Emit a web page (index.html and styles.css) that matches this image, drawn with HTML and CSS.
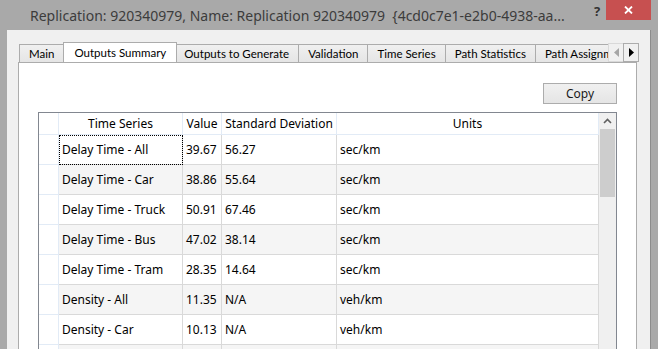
FILE: index.html
```html
<!DOCTYPE html>
<html lang="en">

<head>
    <meta charset="UTF-8">
    <title>Replication 920340979</title>
    <link rel="stylesheet" href="styles.css">
</head>

<body>
    <div class="window">
        <div class="titlebar">
            <span class="title">Replication: 920340979, Name: Replication 920340979&nbsp; {4cd0c7e1-e2b0-4938-aa...</span>
            <span class="help">?</span>
            <span class="close">
                <svg width="9" height="8" viewBox="0 0 9 8">
                    <path d="M1 0.5 L8 7.5 M8 0.5 L1 7.5" stroke="#fff" stroke-width="1.8" fill="none" />
                </svg>
            </span>
        </div>

        <div class="client">
            <div class="tabstrip">
                <div class="tabs">
                    <div class="tab">Main</div>
                    <div class="tab active">Outputs Summary</div>
                    <div class="tab">Outputs to Generate</div>
                    <div class="tab">Validation</div>
                    <div class="tab">Time Series</div>
                    <div class="tab">Path Statistics</div>
                    <div class="tab">Path Assignment</div>
                </div>
                <div class="tab-scroll">
                    <span class="scroll-btn disabled">
                        <svg width="5" height="9" viewBox="0 0 5 9"><path d="M5 0 L0 4.5 L5 9 Z" fill="#a6a6a6" /></svg>
                    </span>
                    <span class="scroll-btn">
                        <svg width="5" height="9" viewBox="0 0 5 9"><path d="M0 0 L5 4.5 L0 9 Z" fill="#000" /></svg>
                    </span>
                </div>
            </div>

            <div class="panel">
                <div class="toolbar">
                    <button class="btn">Copy</button>
                </div>

                <div class="grid">
                    <table class="results">
                        <thead>
                            <tr>
                                <th class="rh"></th>
                                <th class="c-series">Time Series</th>
                                <th class="c-value">Value</th>
                                <th class="c-dev">Standard Deviation</th>
                                <th class="c-units">Units</th>
                            </tr>
                        </thead>
                        <tbody id="rows"></tbody>
                    </table>
                    <div class="vscroll">
                        <div class="vscroll-up">
                            <svg width="9" height="6" viewBox="0 0 9 6"><path d="M1 5 L4.5 1.5 L8 5" stroke="#606060" stroke-width="1.6" fill="none" /></svg>
                        </div>
                        <div class="vscroll-thumb"></div>
                    </div>
                </div>
            </div>
        </div>
    </div>

    <script>
        const results = [
            ['Delay Time - All', '39.67', '56.27', 'sec/km'],
            ['Delay Time - Car', '38.86', '55.64', 'sec/km'],
            ['Delay Time - Truck', '50.91', '67.46', 'sec/km'],
            ['Delay Time - Bus', '47.02', '38.14', 'sec/km'],
            ['Delay Time - Tram', '28.35', '14.64', 'sec/km'],
            ['Density - All', '11.35', 'N/A', 'veh/km'],
            ['Density - Car', '10.13', 'N/A', 'veh/km'],
            ['', '', '', '']
        ];

        const rowsElement = document.getElementById('rows');
        results.forEach(([series, value, dev, units], i) => {
            const focus = i === 0 ? ' focused' : '';
            rowsElement.innerHTML += `<tr><td class="rh"></td><td class="${focus}">${series}</td><td>${value}</td><td>${dev}</td><td>${units}</td></tr>`;
        });
    </script>
</body>

</html>
```

FILE: styles.css
```css
* {
    box-sizing: border-box;
}

body {
    margin: 0;
    font-family: "Noto Sans", "Open Sans", sans-serif;
    font-size: 12px;
    color: #000;
}

.window {
    width: 658px;
    height: 349px;
    overflow: hidden;
    background-color: #a9a9a9;
}

/* title bar */

.titlebar {
    display: flex;
    align-items: flex-start;
    height: 30px;
    padding-left: 30px;
}

.title {
    flex: 1;
    font-size: 14px;
    line-height: 31px;
    color: #3c3c3c;
    white-space: nowrap;
    overflow: hidden;
}

.help {
    width: 18px;
    font-size: 13px;
    font-weight: bold;
    line-height: 22px;
    color: #333;
    text-align: center;
}

.close {
    display: flex;
    align-items: center;
    justify-content: center;
    width: 45px;
    height: 20px;
    margin-right: 7px;
    background-color: #c75050;
}

/* client area */

.client {
    height: 319px;
    margin: 0 7px;
    background-color: #f0f0f0;
    border-right: 1px solid #8c8c8c;
}

.tabstrip {
    position: relative;
    height: 32px;
    padding-top: 12px;
    overflow: hidden;
}

.tabs {
    display: flex;
    align-items: flex-end;
    height: 20px;
    width: 616px;
    padding-left: 13px;
    overflow: hidden;
}

.tab {
    flex: none;
    height: 18px;
    padding: 0 9px;
    font-family: Lato, "Noto Sans", sans-serif;
    font-size: 11.5px;
    line-height: 17px;
    white-space: nowrap;
    background: linear-gradient(#f0f0f0, #e5e5e5);
    border: 1px solid #acacac;
    border-bottom: none;
    margin-left: -1px;
}

.tab.active {
    position: relative;
    z-index: 1;
    height: 21px;
    margin: 0 -2px -1px -1px;
    padding: 0 10px;
    line-height: 19px;
    background: #fff;
}

.tab-scroll {
    position: absolute;
    top: 13px;
    left: 601px;
    display: flex;
}

.scroll-btn {
    display: flex;
    align-items: center;
    justify-content: center;
    width: 16px;
    height: 19px;
    background-color: #f0f0f0;
    border: 1px solid #acacac;
}

.scroll-btn + .scroll-btn {
    margin-left: -1px;
}

.scroll-btn.disabled {
    border-color: #d9d9d9;
}

/* tab page */

.panel {
    height: 288px;
    margin: 0 13px 0 11px;
    padding: 20px 19px 0 19px;
    background-color: #fff;
    border: 1px solid #acacac;
    border-bottom: none;
}

.toolbar {
    display: flex;
    justify-content: flex-end;
    margin-bottom: 8px;
}

.btn {
    width: 74px;
    height: 21px;
    padding: 0;
    font-family: inherit;
    font-size: 12px;
    color: #1a1a1a;
    background: linear-gradient(#f0f0f0, #e5e5e5);
    border: 1px solid #acacac;
    border-radius: 0;
}

.grid {
    display: flex;
    height: 300px;
    background-color: #fff;
    border: 1px solid #828790;
    border-bottom: none;
}

.results {
    width: 560px;
    table-layout: fixed;
    border-collapse: separate;
    border-spacing: 0;
    align-self: flex-start;
}

.results th {
    height: 22px;
    padding: 0 2px;
    font-weight: normal;
    text-align: center;
    white-space: nowrap;
    border-right: 1px solid #e2ebf6;
    border-bottom: 1px solid #e2ebf6;
}

.results td {
    height: 30px;
    padding: 0 3px;
    white-space: nowrap;
    border-right: 1px solid #d9d9d9;
    border-bottom: 1px solid #d9d9d9;
}

.results tbody tr:nth-child(even) td {
    background-color: #f5f5f5;
}

.results .rh,
.results tbody tr td.rh {
    width: 20px;
    background-color: #fff;
    border-right-color: #e2ebf6;
    border-bottom-color: #e2ebf6;
}

.c-series {
    width: 124px;
}

.c-value {
    width: 39px;
}

.c-dev {
    width: 115px;
}

.c-units {
    width: 262px;
}

.results td.focused {
    outline: 1px dotted #000;
    outline-offset: -1px;
}

/* vertical scrollbar */

.vscroll {
    width: 17px;
    background-color: #f0f0f0;
}

.vscroll-up {
    display: flex;
    align-items: center;
    justify-content: center;
    height: 16px;
}

.vscroll-thumb {
    height: 68px;
    margin: 0 1px;
    background-color: #cdcdcd;
}
```
